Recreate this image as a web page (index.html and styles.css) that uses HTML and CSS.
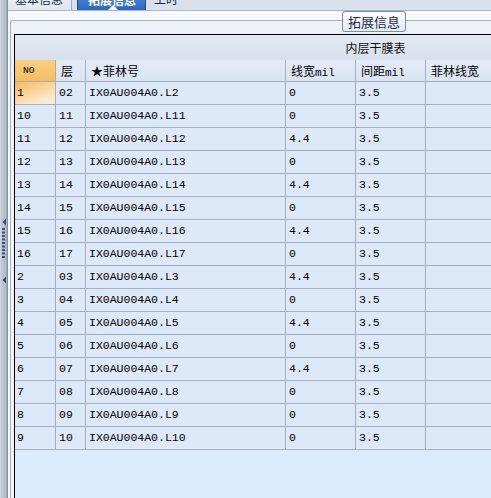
FILE: index.html
```html
<!DOCTYPE html>
<html>
<head>
<meta charset="utf-8">
<link rel="stylesheet" href="styles.css">
</head>
<body>
<div class="app">
  <div class="splitter">
    <svg width="8" height="498" viewBox="0 0 8 498">
      <defs>
        <linearGradient id="sg" x1="0" y1="0" x2="1" y2="0">
          <stop offset="0" stop-color="#d9dee6"/>
          <stop offset="0.15" stop-color="#c2c9d4"/>
          <stop offset="0.7" stop-color="#b3bcc9"/>
          <stop offset="0.85" stop-color="#98a3b3"/>
          <stop offset="1" stop-color="#7d899b"/>
        </linearGradient>
      </defs>
      <rect x="0" y="0" width="8" height="498" fill="url(#sg)"/>
      <polygon points="2.5,222 6,218.5 6,225.5" fill="#3f5070"/>
      <g fill="#3f5070">
        <rect x="2" y="228" width="3" height="2"/>
        <rect x="2" y="231.5" width="3" height="2"/>
        <rect x="2" y="235" width="3" height="2"/>
        <rect x="2" y="238.5" width="3" height="2"/>
        <rect x="2" y="242" width="3" height="2"/>
        <rect x="2" y="245.5" width="3" height="2"/>
        <rect x="2" y="249" width="3" height="2"/>
        <rect x="2" y="252.5" width="3" height="2"/>
        <rect x="2" y="256" width="3" height="2"/>
      </g>
      <polygon points="2.5,280 6,276.5 6,283.5" fill="#3f5070"/>
    </svg>
  </div>
  <div class="content">
    <div class="tabstrip">
      <div class="tab first">基本信息</div>
      <div class="tab active">拓展信息<span class="notch"></span></div>
      <div class="tab plain">工时</div>
    </div>
    <div class="page">
      <div class="groupbox">
        <div class="legend">拓展信息</div>
        <div class="grid">
          <div class="title">内层干膜表</div>
          <div class="row head">
            <div class="c c1 no">NO</div>
            <div class="c c2">层</div>
            <div class="c c3">★菲林号</div>
            <div class="c c4">线宽<span class="m">mil</span></div>
            <div class="c c5">间距<span class="m">mil</span></div>
            <div class="c c6">菲林线宽</div>
          </div>
          <div class="row"><div class="c c1 sel">1</div><div class="c c2">02</div><div class="c c3">IX0AU004A0.L2</div><div class="c c4">0</div><div class="c c5">3.5</div><div class="c c6"></div></div>
          <div class="row"><div class="c c1">10</div><div class="c c2">11</div><div class="c c3">IX0AU004A0.L11</div><div class="c c4">0</div><div class="c c5">3.5</div><div class="c c6"></div></div>
          <div class="row"><div class="c c1">11</div><div class="c c2">12</div><div class="c c3">IX0AU004A0.L12</div><div class="c c4">4.4</div><div class="c c5">3.5</div><div class="c c6"></div></div>
          <div class="row"><div class="c c1">12</div><div class="c c2">13</div><div class="c c3">IX0AU004A0.L13</div><div class="c c4">0</div><div class="c c5">3.5</div><div class="c c6"></div></div>
          <div class="row"><div class="c c1">13</div><div class="c c2">14</div><div class="c c3">IX0AU004A0.L14</div><div class="c c4">4.4</div><div class="c c5">3.5</div><div class="c c6"></div></div>
          <div class="row"><div class="c c1">14</div><div class="c c2">15</div><div class="c c3">IX0AU004A0.L15</div><div class="c c4">0</div><div class="c c5">3.5</div><div class="c c6"></div></div>
          <div class="row"><div class="c c1">15</div><div class="c c2">16</div><div class="c c3">IX0AU004A0.L16</div><div class="c c4">4.4</div><div class="c c5">3.5</div><div class="c c6"></div></div>
          <div class="row"><div class="c c1">16</div><div class="c c2">17</div><div class="c c3">IX0AU004A0.L17</div><div class="c c4">0</div><div class="c c5">3.5</div><div class="c c6"></div></div>
          <div class="row"><div class="c c1">2</div><div class="c c2">03</div><div class="c c3">IX0AU004A0.L3</div><div class="c c4">4.4</div><div class="c c5">3.5</div><div class="c c6"></div></div>
          <div class="row"><div class="c c1">3</div><div class="c c2">04</div><div class="c c3">IX0AU004A0.L4</div><div class="c c4">0</div><div class="c c5">3.5</div><div class="c c6"></div></div>
          <div class="row"><div class="c c1">4</div><div class="c c2">05</div><div class="c c3">IX0AU004A0.L5</div><div class="c c4">4.4</div><div class="c c5">3.5</div><div class="c c6"></div></div>
          <div class="row"><div class="c c1">5</div><div class="c c2">06</div><div class="c c3">IX0AU004A0.L6</div><div class="c c4">0</div><div class="c c5">3.5</div><div class="c c6"></div></div>
          <div class="row"><div class="c c1">6</div><div class="c c2">07</div><div class="c c3">IX0AU004A0.L7</div><div class="c c4">4.4</div><div class="c c5">3.5</div><div class="c c6"></div></div>
          <div class="row"><div class="c c1">7</div><div class="c c2">08</div><div class="c c3">IX0AU004A0.L8</div><div class="c c4">0</div><div class="c c5">3.5</div><div class="c c6"></div></div>
          <div class="row"><div class="c c1">8</div><div class="c c2">09</div><div class="c c3">IX0AU004A0.L9</div><div class="c c4">0</div><div class="c c5">3.5</div><div class="c c6"></div></div>
          <div class="row"><div class="c c1">9</div><div class="c c2">10</div><div class="c c3">IX0AU004A0.L10</div><div class="c c4">0</div><div class="c c5">3.5</div><div class="c c6"></div></div>
        </div>
      </div>
    </div>
  </div>
</div>
</body>
</html>
```

FILE: styles.css
```css
html, body {
  margin: 0;
  padding: 0;
  width: 491px;
  height: 498px;
  overflow: hidden;
  background: #f4f7fb;
  font-family: "Noto Sans CJK SC", sans-serif;
  font-size: 12px;
  color: #000;
}

.app {
  display: flex;
  width: 491px;
  height: 498px;
}

.splitter {
  width: 8px;
  flex: none;
  height: 498px;
}
.splitter svg { display: block; }

.content {
  flex: 1;
  min-width: 0;
  display: flex;
  flex-direction: column;
  overflow: hidden;
}

.tabstrip {
  height: 10px;
  flex: none;
  display: flex;
  align-items: flex-end;
  overflow: hidden;
  background: #d8e1ec;
}

.tab {
  height: 22px;
  line-height: 22px;
  box-sizing: border-box;
  white-space: nowrap;
  flex: none;
  color: #1a2a44;
}

.tab.first {
  width: 64px;
  padding-left: 7px;
  background: linear-gradient(#eef2f8, #e2e8f1);
  border-right: 1px solid #9eabbc;
}

.tab.active {
  position: relative;
  width: 69px;
  margin-left: 5px;
  padding-left: 10px;
  color: #fff;
  font-weight: bold;
  background: linear-gradient(#5b95de, #2a68c2);
  border: 1px solid #1f4f96;
  border-bottom: none;
  border-radius: 3px 3px 0 0;
}

.notch {
  position: absolute;
  left: 30px;
  bottom: 0;
  width: 0;
  height: 0;
  border-left: 5px solid transparent;
  border-right: 5px solid transparent;
  border-bottom: 5px solid #f4f7fb;
}

.tab.plain {
  padding-left: 8px;
}

.page {
  flex: 1;
  display: flex;
  flex-direction: column;
  border-top: 1px solid #a8b5c6;
  padding-top: 9px;
  padding-left: 2px;
  background: #f5f8fc;
  min-height: 0;
}

.groupbox {
  position: relative;
  flex: 1;
  display: flex;
  flex-direction: column;
  border: 1px solid #a6b3c5;
  border-right: none;
  border-bottom: none;
  border-radius: 3px 0 0 0;
  padding-top: 13px;
  padding-left: 3px;
  background: #eef3fa;
  min-height: 0;
}

.legend {
  position: absolute;
  left: 331px;
  top: -10px;
  width: 64px;
  height: 21px;
  box-sizing: border-box;
  border: 1px solid #7f8da3;
  border-radius: 3px;
  background: linear-gradient(#fbfcfe, #e3eaf4);
  color: #1f2b4d;
  font-size: 13px;
  line-height: 19px;
  text-align: center;
}

.grid {
  flex: 1;
  width: 721px;
  flex-shrink: 0;
  border-top: 1px solid #000;
  border-left: 1px solid #000;
  background: linear-gradient(#d6e4f7, #dcebfd);
  min-height: 0;
}

.title {
  height: 25px;
  line-height: 25px;
  text-align: center;
  background: linear-gradient(#e4eaf2, #d7e0ec);
  color: #111;
}

.row {
  display: flex;
  height: 23px;
  box-sizing: border-box;
  border-bottom: 1px solid #a5afbc;
  background: #dde9f9;
}

.row.head {
  height: 22px;
  background: linear-gradient(#e3ebf6, #d9e4f2);
}

.c {
  flex: none;
  box-sizing: border-box;
  height: 100%;
  line-height: 22px;
  border-right: 1px solid #a5afbc;
  padding-left: 3px;
  white-space: nowrap;
  overflow: hidden;
  font-family: "Liberation Mono", monospace;
  font-size: 11.5px;
}

.row.head .c {
  line-height: 21px;
  font-family: "Noto Sans CJK SC", sans-serif;
  font-size: 12px;
  padding-left: 5px;
}

.row.head .c .m {
  font-family: "Liberation Mono", monospace;
  font-size: 11px;
}

.row.head .c.no {
  font-family: "Liberation Mono", monospace;
  font-size: 9.5px;
  padding-left: 8px;
  background: linear-gradient(#f9cf83, #f5bd63);
  border-right-color: #c9a77a;
}

.c1 { width: 41px; padding-left: 2px; }
.c2 { width: 30px; }
.c3 { width: 200px; }
.c4 { width: 70px; }
.c5 { width: 70px; }
.c6 { width: 309px; }

.c.sel {
  background: linear-gradient(160deg, #f6b95a 0%, #f9cf8f 35%, #fde7c6 75%, #fdeedb 100%);
}
```
